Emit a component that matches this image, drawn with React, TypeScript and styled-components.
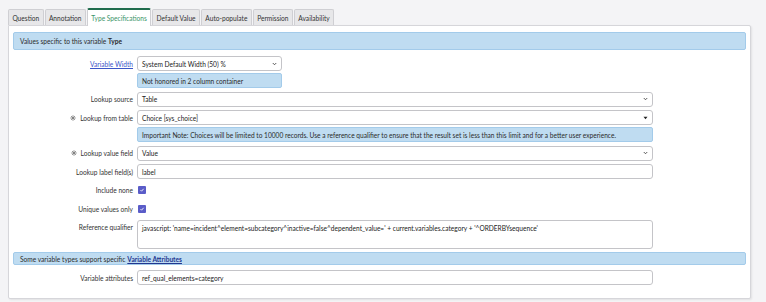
import React from 'react'
import styled, { createGlobalStyle, css } from 'styled-components'

const GlobalStyle = createGlobalStyle`
  body {
    margin: 0;
    background: #f4f4f6;
    font-family: Lato, 'Noto Sans', sans-serif;
    font-size: 6.6px;
    color: #2b2b2b;
  }
`

const tabs = [
  'Question',
  'Annotation',
  'Type Specifications',
  'Default Value',
  'Auto-populate',
  'Permission',
  'Availability',
]

const Page = styled.div`
  padding: 8px 15px 0 8px;
`

const TabBar = styled.div`
  display: flex;
  gap: 1px;
  height: 17px;
  align-items: flex-end;
`

const Tab = styled.div<{ $active?: boolean }>`
  height: 16px;
  box-sizing: border-box;
  padding: 0 3.4px;
  display: flex;
  align-items: center;
  background: #e7e7e9;
  border: 1px solid #cfcfd3;
  border-bottom: none;
  border-radius: 2px 2px 0 0;
  color: #333;
  position: relative;
  z-index: 1;

  ${({ $active }) =>
    $active &&
    css`
      height: 18px;
      margin-bottom: -1px;
      background: #fff;
      color: #3a9468;
      border-top: 2px solid #1f6b4c;
    `}
`

const Panel = styled.div`
  background: #fff;
  border: 1px solid #d6d6da;
  border-radius: 0 2px 2px 2px;
  box-shadow: 1px 1px 2px rgba(0, 0, 0, 0.08);
  padding: 6px 4px 9px;
  width: 743px;
  box-sizing: border-box;
`

const Banner = styled.div<{ $slim?: boolean }>`
  background: #bfdcf1;
  border: 1px solid #a3cbea;
  border-radius: 2px;
  padding: 0 6px;
  height: ${({ $slim }) => ($slim ? '13px' : '18px')};
  display: flex;
  align-items: center;
  box-sizing: border-box;
  margin-bottom: ${({ $slim }) => ($slim ? '5px' : '6px')};

  b {
    font-weight: 700;
  }
`

const BannerLink = styled.a`
  color: #22368f;
  font-weight: 700;
  text-decoration: underline;
  margin-left: 2px;
`

const Row = styled.div`
  display: grid;
  grid-template-columns: 120px auto;
  column-gap: 4px;
  margin-bottom: 3.5px;
`

const Label = styled.div<{ $link?: boolean }>`
  display: flex;
  justify-content: flex-end;
  align-items: center;
  gap: 4px;
  height: 15px;
  color: ${({ $link }) => ($link ? '#3c55c8' : '#333')};
  text-decoration: ${({ $link }) => ($link ? 'underline' : 'none')};
`

const Field = styled.div<{ $narrow?: boolean }>`
  width: ${({ $narrow }) => ($narrow ? '145px' : '516px')};
  display: flex;
  flex-direction: column;
  gap: 2px;
`

const Box = styled.div<{ $tall?: boolean }>`
  height: ${({ $tall }) => ($tall ? '29px' : '15px')};
  box-sizing: border-box;
  border: 1px solid #c4c4c8;
  border-radius: 3px;
  background: #fff;
  padding: ${({ $tall }) => ($tall ? '3px 4px' : '0 4px')};
  display: flex;
  align-items: ${({ $tall }) => ($tall ? 'flex-start' : 'center')};
  justify-content: space-between;
  color: #222;
`

const Info = styled.div`
  height: 15px;
  box-sizing: border-box;
  background: #bfdcf1;
  border: 1px solid #a3cbea;
  border-radius: 2px;
  padding: 0 4px;
  display: flex;
  align-items: center;
`

const Check = styled.span`
  width: 8px;
  height: 8px;
  border-radius: 1px;
  background: #5a5cc8;
  margin: 3.5px 0 0 1px;
  display: flex;
  align-items: center;
  justify-content: center;
`

const Buttons = styled.div`
  display: flex;
  gap: 2px;
  margin-top: 3px;
`

const Button = styled.button<{ $w: number }>`
  width: ${({ $w }) => $w}px;
  height: 16px;
  border: 1px solid #bfc3d0;
  border-radius: 3px;
  background: #fff;
  padding: 0;
`

const Star = () => (
  <svg width="6" height="6" viewBox="0 0 10 10" stroke="#777" strokeWidth="1.3" strokeLinecap="round">
    <path d="M5 1v8M1 5h8M2.2 2.2l5.6 5.6M7.8 2.2L2.2 7.8" />
  </svg>
)

const Chevron = () => (
  <svg width="5" height="4" viewBox="0 0 10 8" fill="none" stroke="#333" strokeWidth="1.6">
    <path d="M1.5 2l3.5 3.5L8.5 2" />
  </svg>
)

const Caret = () => (
  <svg width="5" height="4" viewBox="0 0 10 8" fill="#222">
    <path d="M1 1.5h8L5 6.5z" />
  </svg>
)

const Tick = () => (
  <svg width="6" height="6" viewBox="0 0 10 10" fill="none" stroke="#fff" strokeWidth="1.4">
    <path d="M2.5 5.2l1.8 1.8 3.4-4" />
  </svg>
)

interface FormRowProps {
  label: string
  required?: boolean
  link?: boolean
  children: React.ReactNode
}

const FormRow = ({ label, required, link, children }: FormRowProps) => (
  <Row>
    <Label $link={link}>
      {required && <Star />}
      <span>{label}</span>
    </Label>
    {children}
  </Row>
)

export default function App() {
  return (
    <Page>
      <GlobalStyle />
      <TabBar>
        {tabs.map((t) => (
          <Tab key={t} $active={t === 'Type Specifications'}>
            {t}
          </Tab>
        ))}
      </TabBar>
      <Panel>
        <Banner>
          Values specific to this variable&nbsp;<b>Type</b>
        </Banner>
        <FormRow label="Variable Width" link>
          <Field $narrow>
            <Box>
              System Default Width (50) %
              <Chevron />
            </Box>
            <Info>Not honored in 2 column container</Info>
          </Field>
        </FormRow>
        <FormRow label="Lookup source">
          <Field>
            <Box>
              Table
              <Chevron />
            </Box>
          </Field>
        </FormRow>
        <FormRow label="Lookup from table" required>
          <Field>
            <Box>
              Choice [sys_choice]
              <Caret />
            </Box>
            <Info>
              Important Note: Choices will be limited to 10000 records. Use a reference qualifier to ensure that the
              result set is less than this limit and for a better user experience.
            </Info>
          </Field>
        </FormRow>
        <FormRow label="Lookup value field" required>
          <Field>
            <Box>
              Value
              <Chevron />
            </Box>
          </Field>
        </FormRow>
        <FormRow label="Lookup label field(s)">
          <Field>
            <Box>label</Box>
          </Field>
        </FormRow>
        <FormRow label="Include none">
          <Check>
            <Tick />
          </Check>
        </FormRow>
        <FormRow label="Unique values only">
          <Check>
            <Tick />
          </Check>
        </FormRow>
        <FormRow label="Reference qualifier">
          <Field>
            <Box $tall>
              javascript: 'name=incident^element=subcategory^inactive=false^dependent_value=' +
              current.variables.category + '^ORDERBYsequence'
            </Box>
          </Field>
        </FormRow>
        <Banner $slim>
          Some variable types support specific <BannerLink>Variable Attributes</BannerLink>
        </Banner>
        <FormRow label="Variable attributes">
          <Field>
            <Box>ref_qual_elements=category</Box>
          </Field>
        </FormRow>
      </Panel>
      <Buttons>
        <Button $w={25} aria-label="Save" />
        <Button $w={31} aria-label="Update" />
        <Button $w={30} aria-label="Delete" />
      </Buttons>
    </Page>
  )
}
